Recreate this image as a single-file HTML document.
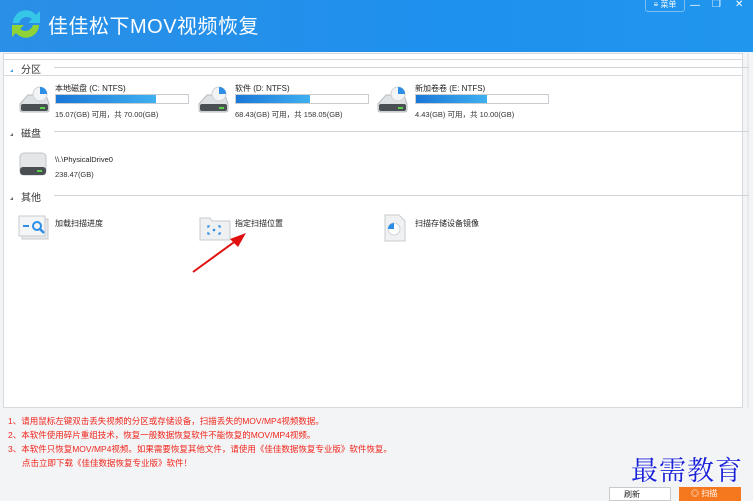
<!DOCTYPE html>
<html><head><meta charset="utf-8">
<style>
*{margin:0;padding:0;box-sizing:border-box}
body{width:753px;height:497px;overflow:hidden;background:#f3f4f6;font-family:"Liberation Sans","Noto Sans CJK SC",sans-serif;position:relative;font-size:8px;color:#222}
.hdr{position:absolute;left:0;top:0;width:753px;height:52px;background:linear-gradient(90deg,#2a8fe6,#1e90ee 60%,#2196ee)}
.title{position:absolute;left:48px;top:10px;color:#fff;font-size:20px;letter-spacing:0.5px}
.menu{position:absolute;left:645px;top:0;width:40px;height:12px;border:1px solid rgba(255,255,255,.4);border-top:none;border-radius:0 0 3px 3px;color:#fff;font-size:8px;line-height:10px;text-align:center}
.win{position:absolute;top:0;color:#fff;font-size:10px}
.panel{position:absolute;left:3px;top:53px;width:740px;height:355px;background:#fff;border:1px solid #d6d9de}
.rgut{position:absolute;left:747px;top:53px;width:2px;height:355px;background:#e8eaed}
.sec{position:absolute;left:10px;font-size:10px;color:#333}
.sec i{display:inline-block;width:0;height:0;border-left:3px solid transparent;border-bottom:3px solid #666;margin-right:8px;vertical-align:middle}
.line{position:absolute;left:54px;right:4px;height:1px;background:#d0d3d7}
.dname{position:absolute;font-size:8px;color:#222}
.bar{position:absolute;width:135px;height:10px;border:1px solid #c9ccd0;background:#fff}
.bar b{display:block;height:8px;background:linear-gradient(90deg,#1a77d8,#3fb0f0)}
.sz{position:absolute;font-size:7.5px;color:#333}
.foot{position:absolute;left:8px;font-size:8.5px;color:#f0261c;white-space:nowrap}
</style></head><body>
<div class="hdr">
<svg style="position:absolute;left:9px;top:7px" width="34" height="34" viewBox="0 0 34 34">
<path d="M4 16 A13 13 0 0 1 27 8 L31 4 L31 16 L19 16 L23 12 A8 8 0 0 0 10 16 Z" fill="#35c6e8"/>
<path d="M30 18 A13 13 0 0 1 7 26 L3 30 L3 18 L15 18 L11 22 A8 8 0 0 0 24 18 Z" fill="#8fd336"/>
</svg>
<div class="title">佳佳松下MOV视频恢复</div>
<div class="menu">≡ 菜单</div>
<div class="win" style="left:690px">—</div>
<div class="win" style="left:712px;top:-1px">❐</div>
<div class="win" style="left:735px;top:-1px">✕</div>
</div>
<div class="panel"></div>
<div class="rgut"></div>
<div style="position:absolute;left:4px;top:59px;width:738px;height:17px;border-top:1px solid #d8dadd;border-bottom:1px solid #d8dadd"></div>
<div class="sec" style="top:61px"><i style="border-bottom-color:#3fa0e6"></i>分区</div>
<div class="line" style="top:67px"></div>
<div class="sec" style="top:125px"><i></i>磁盘</div>
<div class="line" style="top:131px"></div>
<div class="sec" style="top:189px"><i></i>其他</div>
<div class="line" style="top:195px"></div>

<svg style="position:absolute;left:18px;top:84px" width="32" height="30" viewBox="0 0 32 30"><path d="M2 20 L10 11 L28 11 L31 20 L31 26 Q31 28 28 28 L5 28 Q2 28 2 26Z" fill="#dfe2e5" stroke="#b8bcc0"/><rect x="3" y="20" width="27" height="7" rx="2" fill="#4a4f54"/><rect x="22" y="23" width="5" height="2" fill="#5fd04a"/><circle cx="22" cy="10" r="7" fill="#f2f4f6" stroke="#cfd3d6"/><path d="M22 3 A7 7 0 0 1 29 10 L22 10Z" fill="#2d8ee6"/></svg>
<div class="dname" style="left:55px;top:83px">本地磁盘 (C: NTFS)</div>
<div class="bar" style="left:55px;top:94px;width:134px"><b style="width:76%"></b></div>
<div class="sz" style="left:55px;top:109px">15.07(GB) 可用，共 70.00(GB)</div>

<svg style="position:absolute;left:197px;top:84px" width="32" height="30" viewBox="0 0 32 30"><path d="M2 20 L10 11 L28 11 L31 20 L31 26 Q31 28 28 28 L5 28 Q2 28 2 26Z" fill="#dfe2e5" stroke="#b8bcc0"/><rect x="3" y="20" width="27" height="7" rx="2" fill="#4a4f54"/><rect x="22" y="23" width="5" height="2" fill="#5fd04a"/><circle cx="22" cy="10" r="7" fill="#f2f4f6" stroke="#cfd3d6"/><path d="M22 3 A7 7 0 0 1 29 10 L22 10Z" fill="#2d8ee6"/></svg>
<div class="dname" style="left:235px;top:83px">软件 (D: NTFS)</div>
<div class="bar" style="left:235px;top:94px;width:134px"><b style="width:56%"></b></div>
<div class="sz" style="left:235px;top:109px">68.43(GB) 可用，共 158.05(GB)</div>

<svg style="position:absolute;left:376px;top:84px" width="32" height="30" viewBox="0 0 32 30"><path d="M2 20 L10 11 L28 11 L31 20 L31 26 Q31 28 28 28 L5 28 Q2 28 2 26Z" fill="#dfe2e5" stroke="#b8bcc0"/><rect x="3" y="20" width="27" height="7" rx="2" fill="#4a4f54"/><rect x="22" y="23" width="5" height="2" fill="#5fd04a"/><circle cx="22" cy="10" r="7" fill="#f2f4f6" stroke="#cfd3d6"/><path d="M22 3 A7 7 0 0 1 29 10 L22 10Z" fill="#2d8ee6"/></svg>
<div class="dname" style="left:415px;top:83px">新加卷卷 (E: NTFS)</div>
<div class="bar" style="left:415px;top:94px;width:134px"><b style="width:54%"></b></div>
<div class="sz" style="left:415px;top:109px">4.43(GB) 可用，共 10.00(GB)</div>

<svg style="position:absolute;left:19px;top:152px" width="28" height="24" viewBox="0 0 28 24"><rect x="1" y="1" width="26" height="22" rx="4" fill="#e4e6e8" stroke="#c2c5c8"/><rect x="1" y="15" width="26" height="8" rx="3" fill="#4a4f54"/><rect x="18" y="18" width="5" height="2" fill="#5fd04a"/></svg>
<div class="dname" style="left:55px;top:155px;font-size:7.5px">\\.\PhysicalDrive0</div>
<div class="sz" style="left:55px;top:170px">238.47(GB)</div>

<svg style="position:absolute;left:18px;top:215px" width="32" height="26" viewBox="0 0 32 26"><rect x="4" y="4" width="26" height="20" fill="#e8eaec" stroke="#c8cbce"/><rect x="1" y="1" width="26" height="20" fill="#f4f5f6" stroke="#c8cbce"/><rect x="5" y="10" width="6" height="2" fill="#2d8ee6"/><circle cx="19" cy="11" r="4" fill="none" stroke="#2d8ee6" stroke-width="2"/><path d="M22 14 L26 18" stroke="#2d8ee6" stroke-width="2.5"/></svg>
<div class="dname" style="left:55px;top:218px">加载扫描进度</div>
<svg style="position:absolute;left:199px;top:215px" width="32" height="26" viewBox="0 0 32 26"><path d="M1 3 L11 3 L13 6 L31 6 L31 25 L1 25Z" fill="#eef0f2" stroke="#c8cbce"/><path d="M11 11 L9 11 L9 13 M9 17 L9 19 L11 19 M19 11 L21 11 L21 13 M21 17 L21 19 L19 19" stroke="#2d8ee6" stroke-width="1.3" fill="none"/><circle cx="15" cy="15" r="1.3" fill="#2d8ee6"/></svg>
<div class="dname" style="left:235px;top:218px">指定扫描位置</div>
<svg style="position:absolute;left:384px;top:214px" width="22" height="28" viewBox="0 0 22 28"><path d="M1 1 L15 1 L21 7 L21 27 L1 27Z" fill="#f0f1f3" stroke="#c8cbce"/><circle cx="10" cy="15" r="6" fill="#fff" stroke="#d0d3d6"/><path d="M10 9 L10 15 L4 15 A6 6 0 0 1 10 9Z" fill="#2d8ee6"/></svg>
<div class="dname" style="left:415px;top:218px">扫描存储设备镜像</div>

<svg style="position:absolute;left:190px;top:230px" width="60" height="45" viewBox="0 0 60 45"><path d="M3 42 L47 10" stroke="#e01010" stroke-width="2"/><path d="M56 3 L40 9 L48 17Z" fill="#e01010"/></svg>

<div class="foot" style="top:415px">1、请用鼠标左键双击丢失视频的分区或存储设备，扫描丢失的MOV/MP4视频数据。</div>
<div class="foot" style="top:429px">2、本软件使用碎片重组技术，恢复一般数据恢复软件不能恢复的MOV/MP4视频。</div>
<div class="foot" style="top:443px">3、本软件只恢复MOV/MP4视频。如果需要恢复其他文件，请使用《佳佳数据恢复专业版》软件恢复。</div>
<div class="foot" style="top:457px;left:22px">点击立即下载《佳佳数据恢复专业版》软件！</div>

<div style="position:absolute;left:631px;top:449px;font-family:'Noto Serif CJK SC','Noto Serif CJK JP',serif;font-size:27px;color:#1a22d8;letter-spacing:1px;text-shadow:0 0 2px #fff,0 0 2px #fff">最需教育</div>
<div style="position:absolute;left:609px;top:487px;width:62px;height:14px;background:#fff;border:1px solid #c8cbce;font-size:8px;padding:1px 0 0 14px">刷新</div>
<div style="position:absolute;left:679px;top:487px;width:62px;height:14px;background:#f5781e;color:#fff;font-size:8px;padding:1px 0 0 12px">◎ 扫描</div>
</body></html>
